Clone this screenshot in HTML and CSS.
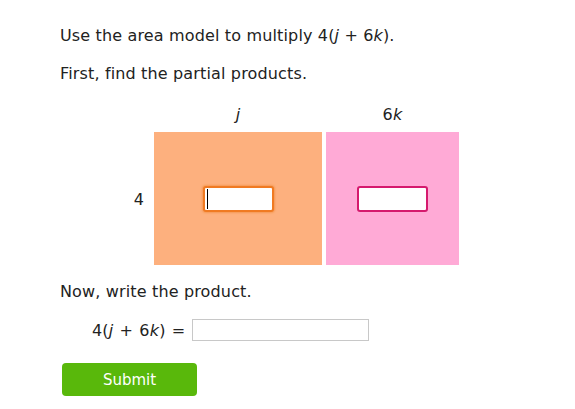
FILE: index.html
```html
<!DOCTYPE html>
<html>
<head>
<meta charset="utf-8">
<link rel="stylesheet" href="styles.css">
</head>
<body>
<div class="page">
  <p class="line first">Use the area model to multiply 4(<i>j</i> + 6<i>k</i>).</p>
  <p class="line second">First, find the partial products.</p>
  <div class="model">
    <div class="corner"></div>
    <div class="head"><i>j</i></div>
    <div class="head">6<i>k</i></div>
    <div class="rowlabel">4</div>
    <div class="cell orange"><span class="box box-orange"><span class="caret"></span></span></div>
    <div class="cell pink"><span class="box box-pink"></span></div>
  </div>
  <p class="line third">Now, write the product.</p>
  <div class="equation">
    <span class="expr">4(<i>j</i> + 6<i>k</i>) =</span>
    <span class="answer"></span>
  </div>
  <button class="submit">Submit</button>
</div>
</body>
</html>
```
FILE: styles.css
```css
html, body {
  margin: 0;
  padding: 0;
  background: #fff;
}
.page {
  padding: 27px 0 0 60px;
  font-family: "DejaVu Sans", Verdana, sans-serif;
  font-size: 16px;
  letter-spacing: 0.15px;
  color: #222;
}
.line {
  margin: 0;
  line-height: 18px;
}
.second {
  margin-top: 20px;
}
.model {
  display: grid;
  grid-template-columns: 90px 168px 133px;
  grid-template-rows: 18px 133px;
  column-gap: 4px;
  row-gap: 8px;
  margin-top: 23px;
}
.head {
  text-align: center;
  line-height: 18px;
}
.rowlabel {
  display: flex;
  align-items: center;
  justify-content: flex-end;
  padding-right: 6px;
  padding-top: 1px;
}
.cell {
  display: flex;
  align-items: center;
  justify-content: center;
}
.orange { background: #fdb07e; }
.pink { background: #ffaad6; }
.box {
  box-sizing: border-box;
  width: 71px;
  height: 26px;
  background: #fff;
  border-radius: 3px;
  border: 2px solid;
  display: flex;
  align-items: center;
  padding-left: 2px;
}
.box-orange {
  border-color: #f07a22;
  box-shadow: 0 0 2px 1px #f59a55;
}
.box-pink {
  border-color: #d51a6e;
}
.caret {
  width: 1px;
  height: 20px;
  background: #000;
}
.third {
  margin-top: 18px;
}
.equation {
  display: flex;
  align-items: center;
  margin-top: 18px;
  padding-left: 32px;
}
.expr {
  word-spacing: 1px;
  width: 100px;
}
.answer {
  box-sizing: border-box;
  width: 177px;
  height: 22px;
  border: 1px solid #c8c8c8;
}
.submit {
  display: block;
  margin: 22px 0 0 2px;
  box-sizing: border-box;
  width: 135px;
  height: 33px;
  border: none;
  border-radius: 4px;
  background: #59b80b;
  color: #fff;
  font-family: "DejaVu Sans", Verdana, sans-serif;
  font-size: 15px;
  letter-spacing: 0;
  padding: 0;
}
```
